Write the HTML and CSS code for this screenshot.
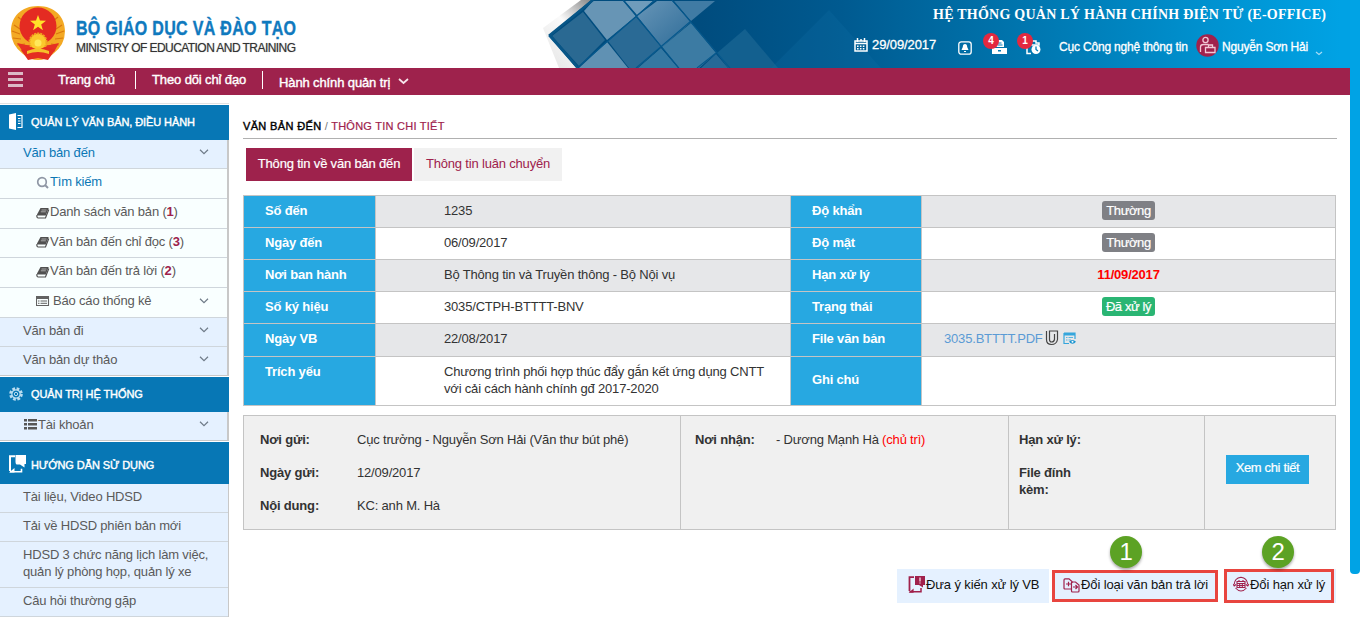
FILE: index.html
```html
<!DOCTYPE html>
<html lang="vi">
<head>
<meta charset="utf-8">
<title>E-Office</title>
<link rel="stylesheet" href="styles.css">
</head>
<body>
<div class="page">
<div class="frame">
  <header class="header">
    <svg class="banner" width="820" height="68" viewBox="530 0 820 68">
      <defs>
        <linearGradient id="sea" gradientUnits="userSpaceOnUse" x1="700" y1="0" x2="1340" y2="0">
          <stop offset="0" stop-color="#004c7e"/><stop offset=".22" stop-color="#005a90"/><stop offset=".5" stop-color="#0075ae"/><stop offset=".8" stop-color="#0092d0"/><stop offset="1" stop-color="#00a2e4"/>
        </linearGradient>
        <linearGradient id="paper" x1="0" y1="1" x2=".8" y2="0">
          <stop offset="0" stop-color="#e4e4e4"/><stop offset=".6" stop-color="#fafafa"/><stop offset="1" stop-color="#8c8c8c"/>
        </linearGradient>
        <linearGradient id="tile" x1="0" y1="0" x2="1" y2="1">
          <stop offset="0" stop-color="#6795b7"/><stop offset="1" stop-color="#2e6c98"/>
        </linearGradient>
      </defs>
      <path d="M581 0h20v68h-42L543 28z" fill="url(#paper)"/>
      <path d="M591 0H1350V68H577L549 36z" fill="url(#sea)"/>
      <path d="M583 12L605 40 579 66 552 36z" fill="#2a6992"/>
      <path d="M593 1h30l13 15-29 24-23-29z" fill="#6795b5"/>
      <path d="M607 42l21 26h-49z" fill="#6091b3"/>
      <path d="M636 17l25 30-24 21h-8L608 41z" fill="#2a6a95"/>
      <path d="M657 1h15l19 21-29 25-25-31z" fill="url(#tile)"/>
      <path d="M625 1h28l-16 14z" fill="#6f9cbb"/>
      <path d="M674 1h41l-24 20z" fill="#407ba4"/>
      <path d="M691 23l25 30-17 15h-20l-17-21z" fill="#3c7ba3"/>
      <path d="M661 48l17 20h-40z" fill="#3578a2"/>
      <path d="M716 54l12 14h-27z" fill="#266997"/>
      <path d="M745 29l33 39h-50l-11-15z" fill="#13608f"/>
      <path d="M829 10l52 58h-110z" fill="#1272a8" opacity=".22"/>
      <path d="M593 0l-44 36 28 32M623 0l56 68M672 0l58 68M655 0l-78 68M636 68l55-47M697 68l19-15" fill="none" stroke="#05588d" stroke-width="1.1"/>
      <path d="M593 0L550 35l27 32" fill="none" stroke="#085687" stroke-width="2.5"/>
    </svg>
    <div class="brand">
      <svg width="60" height="60" viewBox="0 0 60 60">
        <path d="M29 1C12 1 2 12 2 26q0 14 12 23 7 6 15 6t15-6q12-9 12-23C56 12 46 1 29 1z" fill="#f3a924"/>
        <g fill="none" stroke="#d9780f" stroke-width="1.200">
          <path d="M5 20l6 4M3 26l8 3M4 33l8 1M8 40l8-1M53 20l-6 4M55 26l-8 3M54 33l-8 1M50 40l-8-1M9 12l5 4M49 12l-5 4"/>
        </g>
        <circle cx="29" cy="21" r="18.500" fill="#e42b22"/>
        <path d="M29 10l2 5.600 6 .2-4.800 3.600 1.700 5.800-4.900-3.400-4.900 3.400 1.700-5.800L21 15.800l6-.2z" fill="#ffe329"/>
        <path d="M8 38q21 6 42 0l-5 9H14z" fill="#e63024"/>
        <circle cx="29" cy="37" r="8.500" fill="#fbc92c" stroke="#f0a520" stroke-width="2" stroke-dasharray="2 1"/>
        <circle cx="29" cy="38" r="3.500" fill="#ffe85a"/>
        <path d="M12 45l10-3 7 3 7-3 10 3-7 10-10-2-10 2z" fill="#e42d21"/>
        <path d="M18 46q11-5 22 0v3q-11-4-22 0z" fill="#f5c12a"/>
      </svg>
      <div class="brand-text">
        <div class="brand-vi">BỘ GIÁO DỤC VÀ ĐÀO TẠO</div>
        <div class="brand-en">MINISTRY OF EDUCATION AND TRAINING</div>
      </div>
    </div>
    <div class="head-right">
      <div class="sys-title">HỆ THỐNG QUẢN LÝ HÀNH CHÍNH ĐIỆN TỬ (E-OFFICE)</div>
      <div class="userbar">
        <svg class="cal" width="14" height="14" viewBox="0 0 14 14"><path d="M1 3h12v10H1zM1 5.500h12" fill="none" stroke="#fff" stroke-width="1.500"/><path d="M3.500 0v4M10.500 0v4M7 1v2" stroke="#fff" stroke-width="1.500"/><path d="M3 8.200h8M3 10.800h8" stroke="#fff" stroke-width="1.400" stroke-dasharray="1.600 1.300"/></svg>
        <span class="date">29/09/2017</span>
        <svg class="bell" width="14" height="14" viewBox="0 0 14 14"><rect x=".8" y=".8" width="12.400" height="12.400" rx="2.500" fill="none" stroke="#fff" stroke-width="1.300"/><path d="M7 3q2.200 0 2.200 3l1.300 3h-7l1.300-3Q4.800 3 7 3z" fill="#fff"/><path d="M6 10h2v1H6z" fill="#fff"/></svg>
        <span class="alert a1"><svg width="15" height="14" viewBox="0 0 15 14"><path d="M4 0h6l2 2v5H4z" fill="#fff"/><path d="M5.500 3h4M5.500 5h5" stroke="#0078b4"/><path d="M0 8h15v6H0z" fill="#fff"/><path d="M6 10h3v1.500H6z" fill="#0078b4"/></svg><b>4</b></span>
        <span class="alert a2"><svg width="15" height="15" viewBox="0 0 15 15"><path d="M4 1h6v2h3v2H6zM1 7v6.500h4" fill="none" stroke="#fff" stroke-width="1.500"/><circle cx="10" cy="9.500" r="4.500" fill="#fff"/><path d="M10 6.500v3l2 1.500" fill="none" stroke="#007cb9" stroke-width="1.300"/></svg><b>1</b></span>
        <span class="dept">Cục Công nghệ thông tin</span>
        <svg class="avatar" width="23" height="23" viewBox="0 0 23 23"><circle cx="11.500" cy="11.500" r="11.200" fill="#a0214c"/><g fill="none" stroke="#f2c9d6" stroke-width="1.300"><circle cx="9.500" cy="6" r="2.600"/><path d="M4.500 18v-5q0-2.500 3-2.500h5M9.500 13.500h9.500v5H9.500zM12.500 13v-2h4v2"/></g></svg>
        <span class="uname">Nguyễn Sơn Hải</span>
        <svg class="udown" width="8" height="5" viewBox="0 0 8 5"><path d="M1 1l3 2.500L7 1" fill="none" stroke="#a8dcf5" stroke-width="1.200"/></svg>
      </div>
    </div>
  </header>
  <nav class="nav">
    <span class="burger"><i></i><i></i><i></i></span>
    <span class="n1">Trang chủ</span><span class="sep"></span>
    <span class="n2">Theo dõi chỉ đạo</span><span class="sep"></span>
    <span class="n3">Hành chính quản trị</span>
    <svg width="11" height="7" viewBox="0 0 11 7"><path d="M1 1l4.500 4L10 1" fill="none" stroke="#f7e6ec" stroke-width="1.700"/></svg>
  </nav>
  <div class="body">
    <aside class="side">
      <div class="s-head">
        <svg width="14" height="17" viewBox="0 0 14 17"><path d="M0 1.500L7 0v17l-7-1.500z" fill="#fff"/><path d="M8.500 2.500H13v12H8.500M9 5.500h2.500M9 8h2.500M9 10.500h2.500" fill="none" stroke="#fff" stroke-width="1.200"/></svg>
        <span class="w1">QUẢN LÝ VĂN BẢN, ĐIỀU HÀNH</span></div>
      <div class="s-group">
        <div class="row active h28"><span>Văn bản đến</span><svg class="chev"><use href="#dn"/></svg></div>
        <div class="row sub active"><svg width="14" height="14" viewBox="0 0 14 14"><circle cx="6" cy="7" r="4.300" fill="none" stroke="#8f97a5" stroke-width="1.700"/><path d="M9 10l3 3" stroke="#8f97a5" stroke-width="2"/></svg><span>Tìm kiếm</span></div>
        <div class="row sub"><svg class="bk"><use href="#book"/></svg><span>Danh sách văn bản (<b>1</b>)</span></div>
        <div class="row sub h28"><svg class="bk"><use href="#book"/></svg><span>Văn bản đến chỉ đọc (<b>3</b>)</span></div>
        <div class="row sub"><svg class="bk"><use href="#book"/></svg><span>Văn bản đến trả lời (<b>2</b>)</span></div>
        <div class="row sub"><svg width="17" height="12" viewBox="0 0 17 12"><path d="M.500 1.500h12v9H.500z" fill="none" stroke="#626262" stroke-width="1.100"/><path d="M0 1h13v3H0z" fill="#626262"/><path d="M2 6h1.500M4.500 6H11M2 8.300h1.500M4.500 8.300H11" stroke="#626262"/></svg><span>Báo cáo thống kê</span><svg class="chev"><use href="#dn"/></svg></div>
        <div class="row h28"><span>Văn bản đi</span><svg class="chev"><use href="#dn"/></svg></div>
        <div class="row h28 last"><span>Văn bản dự thảo</span><svg class="chev"><use href="#dn"/></svg></div>
      </div>
      <div class="s-head">
        <svg width="14" height="14" viewBox="0 0 14 14"><circle cx="7" cy="7" r="5.300" fill="none" stroke="#b9dcf0" stroke-width="3" stroke-dasharray="2.600 1.560"/><circle cx="7" cy="7" r="4.200" fill="none" stroke="#b9dcf0" stroke-width="1.200"/><circle cx="7" cy="7" r="1.700" fill="none" stroke="#b9dcf0"/></svg>
        <span class="w2">QUẢN TRỊ HỆ THỐNG</span></div>
      <div class="s-group">
        <div class="row h28 last"><svg width="15" height="11" viewBox="0 0 15 11"><path d="M1 0h3v2.600H1zM5 0h9v2.600H5zM1 4h3v2.600H1zM5 4h9v2.600H5zM1 8h3v2.600H1zM5 8h9v2.600H5z" fill="#565656"/></svg><span>Tài khoản</span><svg class="chev"><use href="#dn"/></svg></div>
      </div>
      <div class="s-head tall">
        <svg width="17" height="18" viewBox="0 0 17 18"><path d="M6 1.200H1V16" fill="none" stroke="#fff" stroke-width="2"/><path d="M6.500 0H17v9h-1.500v3.500L11 9.500H7.500q-1-1-1-2.500zM0 17.500L5.500 13v4.500z" fill="#fff"/><path d="M1 16.700h11.500v-3" fill="none" stroke="#fff" stroke-width="1.600"/></svg>
        <span class="w3">HƯỚNG DẪN SỬ DỤNG</span></div>
      <div class="s-group plain">
        <div class="row h28"><span>Tài liệu, Video HDSD</span></div>
        <div class="row h28"><span>Tải về HDSD phiên bản mới</span></div>
        <div class="row two"><span>HDSD 3 chức năng lịch làm việc,<br>quản lý phòng họp, quản lý xe</span></div>
        <div class="row h28"><span>Câu hỏi thường gặp</span></div>
      </div>
    </aside>
    <main class="main">
      <div class="crumb"><strong>VĂN BẢN ĐẾN</strong> <i>/</i> <span>THÔNG TIN CHI TIẾT</span></div>
      <div class="tabs"><div class="tab on">Thông tin về văn bản đến</div><div class="tab">Thông tin luân chuyển</div></div>
      <div class="grid">
        <div class="k">Số đến</div><div class="v g">1235</div><div class="k">Độ khẩn</div><div class="v g c"><em>Thường</em></div>
        <div class="k">Ngày đến</div><div class="v">06/09/2017</div><div class="k">Độ mật</div><div class="v c"><em>Thường</em></div>
        <div class="k">Nơi ban hành</div><div class="v g">Bộ Thông tin và Truyền thông - Bộ Nội vụ</div><div class="k">Hạn xử lý</div><div class="v g c"><strong>11/09/2017</strong></div>
        <div class="k">Số ký hiệu</div><div class="v">3035/CTPH-BTTTT-BNV</div><div class="k">Trạng thái</div><div class="v c"><em class="ok">Đã xử lý</em></div>
        <div class="k">Ngày VB</div><div class="v g">22/08/2017</div><div class="k">File văn bản</div><div class="v g file"><a>3035.BTTTT.PDF</a>
          <svg width="14" height="16" viewBox="0 0 14 16"><path d="M1.500 1v8.500q0 5 5 5t6-5V1H4.500v8.500q0 2.500 2.200 2.500T9.500 9.500V4" fill="none" stroke="#444" stroke-width="1.200"/></svg>
          <svg width="13" height="13" viewBox="0 0 13 13"><path d="M1 1h11v6M6 11.500H1V1" fill="none" stroke="#35a6dc" stroke-width="1.200"/><path d="M1 1h11v2.500H1z" fill="#35a6dc"/><path d="M3 5.500h1.500M5.500 5.500H10M3 8h1.500M5.500 8H8" stroke="#5ab5e0"/><path d="M6 9.800q3.500-3.500 7 0-3.500 4-7 0z" fill="#1593d0"/><circle cx="9.500" cy="9.800" r="1" fill="#fff"/></svg></div>
        <div class="k">Trích yếu</div><div class="v two">Chương trình phối hợp thúc đẩy gắn kết ứng dụng CNTT<br>với cải cách hành chính gđ 2017-2020</div><div class="k mid">Ghi chú</div><div class="v"></div>
      </div>
      <div class="info">
        <div class="cell c1"><b>Nơi gửi:</b><span>Cục trưởng - Nguyễn Sơn Hải (Văn thư bút phê)</span><b>Ngày gửi:</b><span>12/09/2017</span><b>Nội dung:</b><span>KC: anh M. Hà</span></div>
        <div class="cell c2"><b>Nơi nhận:</b><span>- Dương Mạnh Hà <u>(chủ trì)</u></span></div>
        <div class="cell c3"><b>Hạn xử lý:</b><b>File đính<br>kèm:</b></div>
        <div class="cell c4"><div class="more">Xem chi tiết</div></div>
      </div>
      <div class="actions">
        <div class="act p1"><svg width="18" height="17" viewBox="0 0 18 17"><path d="M6 1.200H1.500V15" fill="none" stroke="#a0214c" stroke-width="1.800"/><path d="M7 0h10v9h-2v2.500L11 9H7zM.600 16.800l5-4.300v4.300z" fill="#a0214c"/><path d="M1.500 15.800h11.500V12" fill="none" stroke="#a0214c" stroke-width="1.500"/><path d="M12 1.500v4M12 6.500v1" stroke="#f4dde5" stroke-width="1.300"/></svg><span>Đưa ý kiến xử lý VB</span></div>
        <div class="act p2 boxed"><svg width="17" height="17" viewBox="0 0 17 17"><g fill="none" stroke="#a0214c" stroke-width="1.200"><path d="M8 12H2Q1 12 1 11V3Q1 1.800 2 1.800H6L9 4.500V6"/><path d="M9 5h3.500L16 8v6q0 1-1 1H9.500q-1 0-1-1V5.500z"/><path d="M3 7h5M5.500 4.800v4.400M10 10h5M12.500 8l2 2-2 2"/></g></svg><span>Đổi loại văn bản trả lời</span><mark>1</mark></div>
        <div class="act p3 boxed"><svg width="16" height="16" viewBox="0 0 16 16"><g fill="none" stroke="#a0214c" stroke-width="1.100"><path d="M1.200 8.500Q1.500 2 8 1.200q6 .8 6.800 7.300M2.500 12q5.500 6 11 0"/><path d="M4 5.500h8v6H4zM4 7.500h8M6 4v2M10 4v2M4 9.500h8M6.700 7.500v4M9.300 7.500v4M0 8l1.200 2L3 8.500M16 8l-1.200 2L13 8.500"/></g></svg><span>Đổi hạn xử lý</span><mark>2</mark></div>
      </div>
    </main>
  </div>
</div>
<div class="scroll"></div>
</div>
<svg class="defs" width="0" height="0">
  <symbol id="dn" viewBox="0 0 10 6"><path d="M1 .800l4 3.800L9 .800" fill="none" stroke="#6f7b88" stroke-width="1.200"/></symbol>
  <symbol id="book" viewBox="0 0 14 12"><path d="M4.500 1h8.200L9.800 8.500H2Q.500 8.500 1 7.500z" fill="#505050"/><path d="M1 8q-.500 2.800 1 3h7.500L12.800 2.500" fill="none" stroke="#505050" stroke-width="1.200"/><path d="M5.500 3h5M4.800 4.800h5" stroke="#c0c0c0" stroke-width=".8"/></symbol>
</svg>
</body>
</html>
```

FILE: styles.css
```css
* { box-sizing: border-box; }
body { margin: 0; background: #fff; font: 13px/17px "Liberation Sans", Arial, sans-serif; color: #333; white-space: nowrap; overflow: hidden; letter-spacing: -.18px; }
svg { flex: none; display: block; }
.defs { position: absolute; }
.page { display: flex; height: 626px; align-items: flex-start; }
.frame { width: 1350px; flex: none; }
.scroll { width: 10px; height: 574px; background: #00a3e5; border-radius: 0 0 4px 4px; }

.header { position: relative; height: 68px; display: flex; justify-content: space-between; }
.banner { position: absolute; left: 530px; top: 0; z-index: -1; }
.brand { display: flex; padding: 5px 0 0 9px; }
.brand-text { padding: 12px 0 0 7px; }
.brand-vi { font: bold 20px/23px "Liberation Sans", Arial, sans-serif; letter-spacing: .4px; color: #0f79be; transform: scaleX(.8); transform-origin: 0 0; width: 220px; -webkit-text-stroke: .4px #0f79be; }
.brand-en { font-size: 12px; line-height: 17px; color: #333; letter-spacing: -.56px; width: 222px; text-shadow: 0 0 1px #999; }
.head-right { width: 497px; display: flex; flex-direction: column; }
.sys-title { font: bold 14px/18px "Liberation Serif", "Times New Roman", serif; color: #fff; padding: 6px 0 0 80px; height: 30px; letter-spacing: .25px; }
.userbar { display: flex; color: #fff; align-items: flex-start; -webkit-text-stroke: .3px #fff; }
.cal { margin: 8px 4px 0 1px; }
.date { width: 64px; margin-top: 6px; letter-spacing: -.1px; }
.bell { margin: 11px 0 0 22px; }
.alert { position: relative; width: 15px; margin: 10px 0 0 20px; }
.a2 { margin-left: 19px; }
.alert b { position: absolute; left: -9px; top: -7px; width: 16px; height: 16px; border-radius: 50%; background: #e3293f; font: bold 10px/16px "Liberation Sans", Arial, sans-serif; text-align: center; -webkit-text-stroke: 0; }
.dept { margin: 9px 0 0 18px; width: 131px; font-size: 12px; }
.avatar { margin: 4px 3px 0 6px; }
.uname { margin-top: 9px; width: 87px; font-size: 12px; }
.udown { margin: 21px 0 0 6px; }

.nav { height: 27px; background: #9e224c; color: #fff; display: flex; padding-left: 8px; -webkit-text-stroke: .4px #fff; letter-spacing: -.12px; }
.burger { display: flex; flex-direction: column; gap: 3px; width: 50px; padding-top: 4px; }
.burger i { width: 15px; height: 3px; background: #dcbac6; }
.nav span { line-height: 23px; }
.nav .sep { width: 1px; height: 18px; margin-top: 3px; background: #fff; }
.n1 { width: 77px; }
.n2 { width: 126px; padding-left: 16px; }
.nav .n3 { padding-left: 16px; line-height: 29px; width: 135px; }
.nav > svg { margin-top: 10px; }

.body { display: flex; padding-top: 8px; }
.side { width: 229px; flex: none; padding-top: 1px; border-top: 1px solid #e2e2e2; }
.s-head { height: 35px; background: #0777b5; color: #fff; display: flex; align-items: center; gap: 8px; padding-left: 9px; font-size: 11px; letter-spacing: -.09px; -webkit-text-stroke: .4px #fff; }
.s-head svg { margin-bottom: 2px; }
.s-head.tall { height: 42px; gap: 5px; padding-top: 4px; }
.s-group { border-right: 2px solid #c8c8c8; margin-bottom: 1px; }
.s-group.plain { border-right-width: 1px; }
.row { height: 30px; display: flex; align-items: center; padding-left: 23px; border-bottom: 1px solid #cfd6dc; background: #e5f1ff; color: #5a5a5a; padding-bottom: 4px; }
.row.h28 { height: 29px; }
.row.last { border-color: #c8c8c8; }
.row.sub { background: #f9ffff; padding-left: 36px; }
.row.active span { color: #0b77b5; }
.row b { color: #9e224c; }
.row.two { height: 46px; }
.bk { width: 14px; height: 12px; margin-top: 2px; }
.chev { width: 10px; height: 6px; margin: 0 18px 0 auto; }

.main { padding: 0 14px 0 14px; flex: 1; }
.crumb { height: 36px; border-bottom: 1px solid #b0b0b0; font-size: 11px; line-height: 46px; letter-spacing: .25px; color: #777; width: 1094px; }
.crumb i { font-style: normal; }
.crumb strong { color: #000; font-weight: normal; letter-spacing: .35px; -webkit-text-stroke: .4px #000; }
.crumb span { color: #9e224c; -webkit-text-stroke: .2px #9e224c; }
.tabs { display: flex; gap: 2px; padding: 9px 0 0 3px; height: 56px; }
.tab { height: 33px; line-height: 31px; width: 148px; text-align: center; background: #f1f1f1; color: #9e224c; }
.tab.on { width: 166px; background: #9e224c; color: #fff; -webkit-text-stroke: .2px #fff; }
.grid { display: grid; width: 1093px; background: #c4c4c4; padding: 1px; gap: 1px; grid-template-columns: 131px 414px 130px 413px; grid-template-rows: 31px 31px 31px 31px 32px 48px; }
.k { background: #27a8e1; color: #fff; font-weight: bold; padding: 6px 0 0 21px; }
.k.mid { padding-top: 14px; }
.v { background: #fff; padding: 6px 0 0 68px; }
.v.g { background: #e6e7e9; }
.v.c { padding-left: 0; text-align: center; }
.v strong { color: #f00; letter-spacing: -.2px; }
.v em { display: block; font-style: normal; background: #7f8085; color: #fff; border-radius: 3px; width: 53px; height: 19px; line-height: 19px; letter-spacing: -.4px; margin: -1px auto 0; -webkit-text-stroke: .2px #fff; }
.v em.ok { background: #2ab573; }
.v.file { padding-left: 22px; display: flex; color: #5b9bd5; gap: 4px; }
.v.file a { margin-right: -2px; }
.v.file svg:last-child { margin-top: 2px; }
.info { margin-top: 9px; width: 1093px; height: 115px; border: 1px solid #c4c4c4; background: #f0f0f0; display: flex; }
.cell { border-right: 1px solid #c4c4c4; padding: 15px 0 0 16px; display: grid; row-gap: 16px; align-content: start; }
.c1 { width: 437px; grid-template-columns: 97px 1fr; }
.c2 { width: 328px; grid-template-columns: 81px 1fr; padding-left: 14px; }
.c3 { width: 196px; padding-left: 10px; }
.c4 { flex: 1; border: 0; padding: 39px 0 0 21px; }
.more { width: 83px; height: 29px; line-height: 25px; background: #27a8e1; color: #fff; text-align: center; -webkit-text-stroke: .2px #fff; letter-spacing: -.35px; }
.cell u { text-decoration: none; color: #f00; }
.actions { display: flex; padding: 39px 0 0 654px; color: #111; letter-spacing: -.12px; }
.act { position: relative; display: flex; height: 34px; background: #e5f1ff; line-height: 31px; }
.act svg { margin-top: 7px; }
.p1 { width: 152px; padding-left: 11px; }
.boxed { border: 3px solid #e8453f; line-height: 24px; }
.boxed svg { margin-top: 4px; }
.p2 { width: 166px; height: 32px; margin: 1px 0 0 3px; padding-left: 8px; }
.p2 span { padding-left: 1px; }
.p3 { width: 110px; margin-left: 6px; padding-left: 6px; box-shadow: 2px 0 #e5f1ff; }
.p3 span { padding: 1px 0 0 1px; }
.act mark { position: absolute; width: 32px; height: 32px; border-radius: 50%; background: #5ca224; color: #fff; font: 24px/31px "Liberation Sans", Arial, sans-serif; text-align: center; top: -37px; left: 55px; box-shadow: 0 2px 3px #0005; }
.p3 mark { left: 35px; top: -36px; }
```
